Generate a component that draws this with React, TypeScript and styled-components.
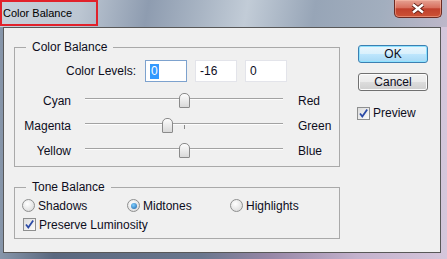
import styled, { createGlobalStyle } from 'styled-components';

const GlobalStyle = createGlobalStyle`
  html, body {
    margin: 0;
    padding: 0;
  }
  body {
    font-family: 'Liberation Sans', Arial, sans-serif;
    color: #0d0d1c;
  }
  * {
    box-sizing: border-box;
  }
`;

const sliders = [
    { left: 'Cyan', right: 'Red', value: 0 },
    { left: 'Magenta', right: 'Green', value: -16 },
    { left: 'Yellow', right: 'Blue', value: 0 },
];

const tones = [
    { label: 'Shadows', checked: false },
    { label: 'Midtones', checked: true },
    { label: 'Highlights', checked: false },
];

const CheckMark = () => (
    <svg width='11' height='11' viewBox='0 0 11 11'>
        <path
            d='M2 5.5 L4.3 8.5 L9.2 1.5'
            fill='none'
            stroke='#2b4aa6'
            strokeWidth='1.8'
        />
    </svg>
);

const App = () => {
    return (
        <>
            <GlobalStyle />
            <Window>
                <TitleBar>
                    <TitleBox>Color Balance</TitleBox>
                    <CloseButton>
                        <svg width='16' height='11' viewBox='0 0 16 11'>
                            <path
                                d='M3 1.5 L13 9.5 M13 1.5 L3 9.5'
                                stroke='#5e1e14'
                                strokeWidth='4.2'
                            />
                            <path
                                d='M3 1.5 L13 9.5 M13 1.5 L3 9.5'
                                stroke='#ffffff'
                                strokeWidth='2.4'
                            />
                        </svg>
                    </CloseButton>
                </TitleBar>
                <Client>
                    <LeftColumn>
                        <GroupBox $top={12}>
                            <Legend>Color Balance</Legend>
                            <LevelsRow>
                                <LevelsLabel>Color Levels:</LevelsLabel>
                                <Field $focused>
                                    <Selected>0</Selected>
                                </Field>
                                <Field>-16</Field>
                                <Field>0</Field>
                            </LevelsRow>
                            <Sliders>
                                {sliders.map((s) => (
                                    <SliderRow key={s.left}>
                                        <SideLabel>{s.left}</SideLabel>
                                        <TrackArea>
                                            <TrackLine />
                                            <Tick />
                                            <Thumb
                                                style={{
                                                    left: 93.5 + s.value * 1.03,
                                                }}
                                            />
                                        </TrackArea>
                                        <RightLabel>{s.right}</RightLabel>
                                    </SliderRow>
                                ))}
                            </Sliders>
                        </GroupBox>
                        <GroupBox $top={13}>
                            <Legend>Tone Balance</Legend>
                            <ToneBody>
                                <RadioRow>
                                    {tones.map((t) => (
                                        <Option key={t.label}>
                                            <Radio $checked={t.checked} />
                                            {t.label}
                                        </Option>
                                    ))}
                                </RadioRow>
                                <CheckRow>
                                    <CheckBox>
                                        <CheckMark />
                                    </CheckBox>
                                    Preserve Luminosity
                                </CheckRow>
                            </ToneBody>
                        </GroupBox>
                    </LeftColumn>
                    <RightColumn>
                        <OkButton>OK</OkButton>
                        <CancelButton>Cancel</CancelButton>
                        <PreviewRow>
                            <CheckBox>
                                <CheckMark />
                            </CheckBox>
                            Preview
                        </PreviewRow>
                    </RightColumn>
                </Client>
            </Window>
        </>
    );
};

const Window = styled.div`
    width: 447px;
    height: 259px;
    display: flex;
    flex-direction: column;
    overflow: hidden;
    background: linear-gradient(
        to right,
        #8796aa 0%,
        #5a687f 12%,
        #6a778e 45%,
        #9686a6 60%,
        #c4b2cd 80%,
        #d5c6db 100%
    );
`;

const TitleBar = styled.div`
    height: 27px;
    display: flex;
    justify-content: space-between;
    align-items: flex-start;
    background: linear-gradient(
        100deg,
        #c8d1db 0%,
        #bcc6d2 18%,
        #8e9cb0 33%,
        #a9b5c4 45%,
        #c2ccd7 55%,
        #97a5b7 70%,
        #a2aebe 85%,
        #bdb7c9 100%
    );
`;

const TitleBox = styled.div`
    width: 98px;
    height: 26px;
    border: 2px solid #e1212b;
    padding-left: 1px;
    display: flex;
    align-items: center;
    font-size: 11px;
    color: #000;
`;

const CloseButton = styled.div`
    width: 48px;
    height: 18px;
    margin-right: 5px;
    display: flex;
    justify-content: center;
    align-items: center;
    border: 1px solid #6b2a22;
    border-top: none;
    border-radius: 0 0 5px 5px;
    background: linear-gradient(
        #e6a293 0%,
        #d8705e 45%,
        #c0402c 52%,
        #cc5236 100%
    );
    box-shadow: inset 0 0 0 1px rgba(255, 200, 180, 0.45);
`;

const Client = styled.div`
    height: 226px;
    margin: 0 6px 6px 3px;
    border: 1px solid #585858;
    background: #f0f0f0;
    display: flex;
    font-size: 12px;
`;

const LeftColumn = styled.div`
    width: 336px;
    padding-left: 10px;
    display: flex;
    flex-direction: column;
`;

const GroupBox = styled.fieldset<{ $top: number }>`
    width: 326px;
    min-width: 0;
    margin: ${(p) => p.$top}px 0 0;
    padding: 0;
    border: 1px solid #a9a9a9;
`;

const Legend = styled.legend`
    margin-left: 11px;
    padding: 0 6px;
    font-size: 12px;
    line-height: 14px;
`;

const LevelsRow = styled.div`
    height: 22px;
    margin-top: 6px;
    display: flex;
    align-items: center;
    gap: 8px;
`;

const LevelsLabel = styled.div`
    width: 121px;
    margin-right: 1px;
    text-align: right;
`;

const Field = styled.div<{ $focused?: boolean }>`
    width: 42px;
    height: 22px;
    padding-left: 4px;
    display: flex;
    align-items: center;
    background: #fff;
    border: 1px solid ${(p) => (p.$focused ? '#7da2ce' : '#e3e4ea')};
`;

const Selected = styled.span`
    background: #3399ff;
    color: #fff;
    padding: 0 1px;
    line-height: 15px;
`;

const Sliders = styled.div`
    margin-top: 6px;
    padding-bottom: 3px;
    display: flex;
    flex-direction: column;
`;

const SliderRow = styled.div`
    height: 25px;
    display: flex;
    align-items: center;
`;

const SideLabel = styled.div`
    width: 56px;
    text-align: right;
`;

const RightLabel = styled.div``;

const TrackArea = styled.div`
    position: relative;
    width: 198px;
    height: 15px;
    margin: 0 15px 0 14px;
`;

const TrackLine = styled.div`
    margin-top: 5px;
    height: 2px;
    border-top: 1px solid #a2a2a2;
    border-bottom: 1px solid #fdfdfd;
`;

const Tick = styled.div`
    position: absolute;
    left: 99px;
    top: 7px;
    width: 1px;
    height: 4px;
    background: #8a8a8a;
`;

const Thumb = styled.div`
    position: absolute;
    top: 0;
    width: 11px;
    height: 15px;
    border: 1px solid #8a8a8a;
    border-radius: 5px 5px 1px 1px;
    background: linear-gradient(#fdfdfd, #d9d9d9);
`;

const ToneBody = styled.div`
    padding: 2px 0 4px 7px;
`;

const RadioRow = styled.div`
    height: 19px;
    display: grid;
    grid-template-columns: 105px 103px auto;
    align-items: center;
`;

const Option = styled.div`
    display: flex;
    align-items: center;
    gap: 3px;
`;

const Radio = styled.div<{ $checked: boolean }>`
    width: 13px;
    height: 13px;
    border-radius: 50%;
    border: 1px solid #8e8f8f;
    display: flex;
    justify-content: center;
    align-items: center;
    background: radial-gradient(circle at 40% 35%, #ffffff, #d4d4d4);

    &::after {
        content: '';
        display: ${(p) => (p.$checked ? 'block' : 'none')};
        width: 6px;
        height: 6px;
        border-radius: 50%;
        background: radial-gradient(circle at 40% 35%, #7fd0ff, #1d5fa6);
    }
`;

const CheckRow = styled.div`
    height: 19px;
    padding-left: 1px;
    display: flex;
    align-items: center;
    gap: 3px;
`;

const CheckBox = styled.div`
    width: 13px;
    height: 13px;
    border: 1px solid #8e8f8f;
    background: linear-gradient(135deg, #dcdcdc, #fbfbfb);
    display: flex;
    justify-content: center;
    align-items: center;
`;

const RightColumn = styled.div`
    margin-left: 18px;
    display: flex;
    flex-direction: column;
`;

const BaseButton = styled.div`
    width: 70px;
    height: 18px;
    border-radius: 3px;
    display: flex;
    justify-content: center;
    align-items: center;
    font-size: 12px;
`;

const OkButton = styled(BaseButton)`
    margin-top: 17px;
    border: 1px solid #3c7fb1;
    background: linear-gradient(
        #eaf6fd 0%,
        #d9f0fc 50%,
        #bee6fd 50%,
        #a7d9f5 100%
    );
    box-shadow: inset 0 0 0 1px #8ee2ff;
`;

const CancelButton = styled(BaseButton)`
    margin-top: 10px;
    border: 1px solid #707070;
    background: linear-gradient(
        #f2f2f2 0%,
        #ebebeb 50%,
        #dddddd 50%,
        #cfcfcf 100%
    );
    box-shadow: inset 0 0 0 1px #fcfcfc;
`;

const PreviewRow = styled.div`
    height: 18px;
    margin-top: 13px;
    margin-left: -1px;
    display: flex;
    align-items: center;
    gap: 3px;
`;

export default App;
